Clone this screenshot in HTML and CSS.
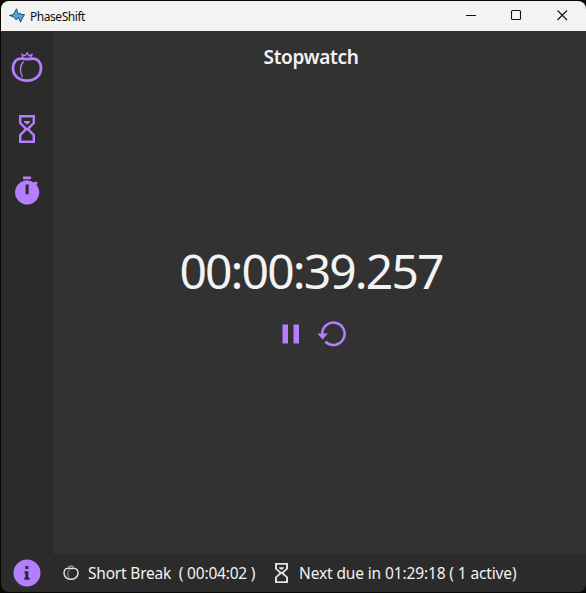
FILE: index.html
```html
<!DOCTYPE html>
<html lang="en">
<head>
<meta charset="utf-8">
<title>PhaseShift</title>
<link rel="stylesheet" href="styles.css">
</head>
<body>
<svg width="0" height="0" class="defs">
  <symbol id="tomato" viewBox="0 0 32 32">
    <path class="line" d="M10.5 6.7C5.3 6.2 2 10.5 2 16.3 2 23.8 8.2 28.600 16 28.600S30 23.800 30 16.300C30 10.500 26.700 6.200 21.500 6.700 18 7.200 14 7.200 10.500 6.700Z"/>
    <path class="fine" d="M12.600 9.500C8.600 13.500 8.600 20.500 11.600 25"/>
    <path class="fine" d="M12.500 6.500 11 2.500 14.200 3.800 16.200 .7 17.800 3.800 21 2.500 19.700 6.500"/>
  </symbol>
  <symbol id="hourglass" viewBox="0 0 16 28">
    <path fill="currentColor" fill-rule="evenodd" d="M0 0H16V8.500L10.500 14 16 19.500V28H0V19.500L5.500 14 0 8.500ZM2.400 2.600V7.600L8 13 13.600 7.600V2.600ZM8 15 2.400 20.400V25.400H13.600V20.400Z"/>
    <path fill="currentColor" d="M5 6H11V7.300L8 9.800 5 7.300Z"/>
  </symbol>
</svg>
<div class="window">
  <header class="titlebar">
    <svg class="app-icon" width="16" height="16" viewBox="0 0 16 16"><path d="M.5 7.500 4.500 6.500 7.500 .8 9.300 6.500 11 5 12.300 6.500 15.500 6.500 13.800 9.500 11.500 14.200 9.500 9 7.300 12 4.500 8.700Z" fill="#48a7e8" stroke="#233b4e" stroke-width=".9" stroke-linejoin="round"/></svg>
    <span class="app-name">PhaseShift</span>
    <div class="controls">
      <svg width="46" height="30" viewBox="0 0 46 30"><path d="M18 14.500H28"/></svg>
      <svg width="46" height="30" viewBox="0 0 46 30"><rect x="17.500" y="9.500" width="9" height="9" rx="1"/></svg>
      <svg width="46" height="30" viewBox="0 0 46 30"><path d="M17.500 9.500 27 19M27 9.500 17.500 19"/></svg>
    </div>
  </header>
  <div class="body">
    <nav class="sidebar">
      <svg class="nav-tomato" width="32" height="32"><use href="#tomato"/></svg>
      <svg class="nav-hourglass" width="16" height="28"><use href="#hourglass"/></svg>
      <svg class="nav-stopwatch" width="26" height="30" viewBox="0 0 26 30"><path fill="currentColor" fill-rule="evenodd" d="M9 .5H17V3.300H9ZM20 6.500 22.200 5.200 23.700 6.700 22.500 8.800A12.100 12.100 0 1 1 20 6.500ZM11.600 8.500V18.300H14.600V8.500Z"/></svg>
      <svg class="nav-info" width="28" height="28" viewBox="0 0 28 28"><circle cx="14" cy="14" r="13.500" fill="currentColor"/><path fill="#2b2b2b" d="M12.300 7H15.300V10H12.300ZM11.500 12.200H15.300V18.600H16.600V20.800H11.400V18.600H12.300V14.300H11.500Z"/></svg>
    </nav>
    <div class="content">
      <main class="stopwatch">
        <h1>Stopwatch</h1>
        <div class="time">00:00:39.257</div>
        <div class="actions">
          <svg width="18" height="20" viewBox="0 0 18 20"><path fill="currentColor" d="M.5 .5H6V19.500H.5ZM11.500 .5H17V19.500H11.500Z"/></svg>
          <svg width="30" height="26" viewBox="0 0 30 26"><path d="M5.200 13A11.200 11.200 0 1 1 8.400 20.700" fill="none" stroke="currentColor" stroke-width="2.500"/><path d="M.5 12.500H10.800L5.600 18.500Z" fill="currentColor"/></svg>
        </div>
      </main>
      <footer class="status">
        <svg class="status-tomato" width="16" height="16"><use href="#tomato"/></svg>
        <span class="break">Short Break&nbsp; ( 00:04:02 )</span>
        <svg class="status-hourglass" width="13" height="20" viewBox="0 0 16 28" preserveAspectRatio="none"><use href="#hourglass" width="16" height="28"/></svg>
        <span class="due">Next due in 01:29:18 ( 1 active)</span>
      </footer>
    </div>
  </div>
</div>
</body>
</html>
```
FILE: styles.css
```css
* { box-sizing: border-box; }
body {
  margin: 0;
  height: 593px;
  padding: 1px 0 1px 1px;
  background: #080808;
  font-family: "Noto Sans", "Open Sans", sans-serif;
  overflow: hidden;
}
svg { display: block; flex: none; }
.defs { position: absolute; }
.line { fill: none; stroke: currentColor; stroke-width: 2.800; }
.fine { fill: none; stroke: currentColor; stroke-width: 1.300; }
.window {
  display: flex;
  flex-direction: column;
  height: 591px;
  border-radius: 8px;
  overflow: hidden;
  background: #2b2b2b;
}
.titlebar {
  display: flex;
  align-items: center;
  height: 30px;
  flex: none;
  padding-left: 8px;
  background: #f3f3f3;
  color: #111;
}
.app-name { margin-left: 5px; font-size: 12px; letter-spacing: -0.450px; }
.controls { display: flex; margin-left: auto; }
.controls svg { fill: none; stroke: #111; stroke-width: 1.100; }
.body { display: flex; flex: 1; }
.sidebar {
  display: flex;
  flex-direction: column;
  align-items: center;
  width: 52px;
  padding: 21px 0 5px;
  color: #b57eff;
}
.nav-hourglass { margin-top: 31px; }
.nav-stopwatch { margin-top: 33px; }
.nav-info { margin-top: auto; }
.content { display: flex; flex: 1; flex-direction: column; }
.stopwatch {
  display: flex;
  flex: 1;
  flex-direction: column;
  align-items: center;
  padding-right: 17px;
  background: #323232;
  color: #f3f3f3;
}
h1 { margin: 12px 0 0; font-size: 19px; line-height: 28px; font-weight: 600; letter-spacing: -0.300px; }
.time { margin-top: 165px; font-size: 48px; line-height: 70px; letter-spacing: -1.880px; }
.actions { display: flex; align-items: center; gap: 17px; margin-top: 15px; padding-left: 7px; color: #b57eff; }
.status {
  display: flex;
  align-items: center;
  height: 38px;
  padding-left: 10px;
  color: #f3f3f3;
  font-size: 15.500px;
  line-height: 20px;
  white-space: pre;
}
.status svg { color: #e2e2e2; }
.break { width: 169px; margin: -1px 0 0 9px; letter-spacing: -0.200px; }
.status-hourglass { margin-left: 18px; }
.due { margin: -1px 0 0 11px; letter-spacing: -0.130px; }
```
